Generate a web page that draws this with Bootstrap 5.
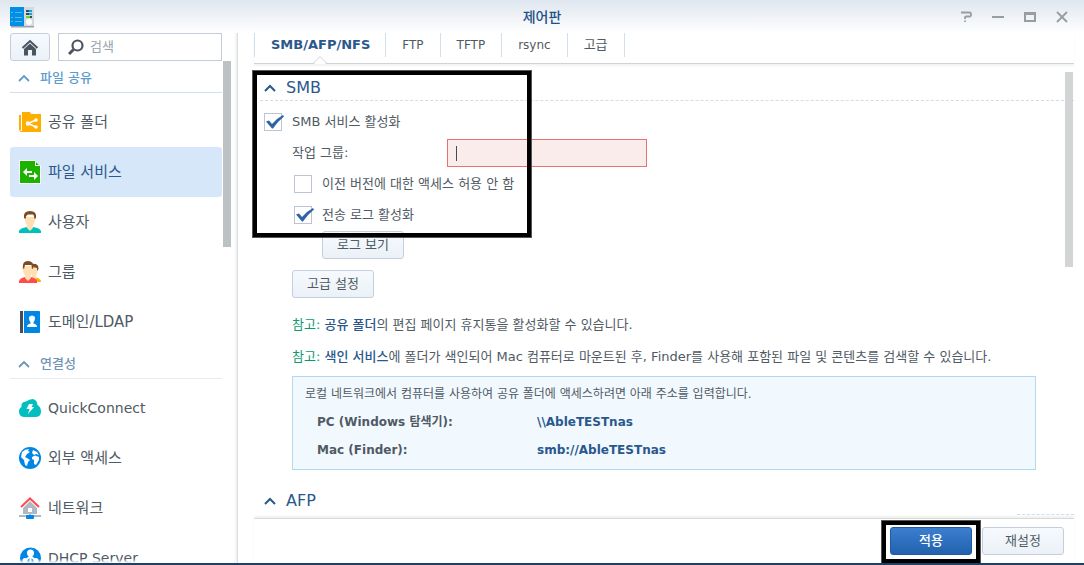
<!DOCTYPE html>
<html lang="ko">
<head>
<meta charset="utf-8">
<meta name="viewport" content="width=device-width, initial-scale=1">
<title>제어판</title>
<link rel="stylesheet" href="https://cdn.jsdelivr.net/npm/bootstrap@5.3.0/dist/css/bootstrap.min.css">
<style>
body{font-family:"DejaVu Sans","Noto Sans CJK KR",sans-serif;font-size:13px;line-height:20px;color:#505a64;background:#fff}
a{text-decoration:none;color:#2a588c}
.win{height:100vh;border-bottom:2px solid #1f3f66}
.titlebar{height:33px;background:linear-gradient(#dfe6ef,#fff);padding:0 16px 0 10px}
.titlebar h1{font-size:14px;line-height:20px;font-weight:500;color:#1f5089}
.winbtn{border:0;background:none;padding:0;width:12px;height:20px;display:flex;align-items:center}
.side{width:238px;border-right:1px solid #dcdee0;box-shadow:inset -3px 0 3px -2px #e6e8ea;padding-left:10px}
.search-row{padding-right:15px;height:28px;gap:8px}
.soft-btn{height:28px;min-width:82px;padding:0 14px;border:1px solid #c3cfdd;border-radius:3px;background:linear-gradient(#f6fafe,#ebf1f7);color:#505a64;font-size:13px;line-height:20px}
.home{min-width:40px;width:40px;padding:0}
.searchbox{border:1px solid #c3cdda;padding-left:9px;gap:6px}
.searchbox input{border:0;outline:0;width:100%;font-size:13px;color:#505a64;background:none;padding:0}
.searchbox input::placeholder{color:#98a3ae;opacity:1}
.list-pane{width:212px;flex:none}
.grp{height:32px;border-bottom:1px solid #d2dfec;margin-bottom:4px;padding:3px 0 0 8px;gap:10px;font-size:13px;font-weight:500;color:#5f9cce}
.grp.calm{color:#6f94b5;border-color:#e6eaee}
.item{height:50px;padding:0 9px;gap:7px;border-radius:3px;font-size:15px;color:#505a64}
.item.latin{font-size:14px}
.item.on{background:#d6e7f9;color:#2a588c}
.item svg{flex:none}
.bar-side{width:8px;height:186px;background:#bcc1c4;margin-left:1px}
.side-fade{height:4px;left:10px;right:16px;bottom:0;background:linear-gradient(#fff0,#fff)}
.pane{padding:0 10px 0 16px}
.tabs{height:31px;border-bottom:1px solid #d0d2d4;box-shadow:0 2px 2px #f2f3f4}
.tabs a{height:24px;padding:0 16px;border-right:1px solid #d2dfec;font-size:12px;line-height:24px;color:#505a64}
.tabs a:first-child{border-left:1px solid #d2dfec;font-size:13px;font-weight:700;color:#2a588c;padding:0 15px 0 16px;position:relative}
.tabs a.ko{font-size:13px}
.notch{left:50%;bottom:-7px;margin-left:-7px}
.form-area{padding:11px 0 0 6px}
.sec{height:26px;border-bottom:1px dashed #cfdded;font-size:16px;line-height:24px;font-weight:400;color:#2a588c;gap:10px;padding-left:4px;margin:0}
.rows{padding:6px 38px 0 4px}
.line-row{min-height:30px;margin-bottom:1px}
.tick{appearance:none;width:20px;height:20px;margin:0 8px 0 0;flex:none;background:url("data:image/svg+xml,%3Csvg xmlns='http://www.w3.org/2000/svg' width='20' height='20'%3E%3Crect x='.5' y='1.5' width='17' height='17' fill='%23fff' stroke='%23bcc6d2'/%3E%3C/svg%3E")}
.tick:checked{background-image:url("data:image/svg+xml,%3Csvg xmlns='http://www.w3.org/2000/svg' width='20' height='20'%3E%3Crect x='.5' y='1.5' width='17' height='17' fill='%23fff' stroke='%23bcc6d2'/%3E%3Cpath d='M2 9.5L5 8.5L8 12Q12.500 6.500 19 3L20 4.500Q13.500 9.500 9 16.500H8Z' fill='%232d62a3'/%3E%3C/svg%3E")}
.in1{padding-left:28px}
.in2{padding-left:30px}
.sub-row{padding-left:2px}
.wg-label{width:155px}
.wg{width:200px;height:28px;border:1px solid #e57373;background:#fbecec;border-radius:0;padding:0 9px;color:#414b55;outline:0}
.caret{width:1px;height:15px;left:9px;top:7px;background:#414b55}
.adv{margin:11px 0}
.note{line-height:32px;margin:0}
.note b{color:#0b9a6c;font-weight:400}
.note a{font-weight:500}
.info{border:1px solid #b4d9ec;background:#f1f9ff;padding:3px 12px 5px;margin-top:3px;font-size:12px;line-height:28px}
.info th{width:220px;font-weight:700;padding:0}
.info td{padding:0;font-weight:700;color:#2a588c}
.info table{margin-left:12px}
.afp{margin-top:18px;border-bottom:0}
.bar-main{right:11px;top:39px;width:8px;height:195px;background:#d3d4d6}
.foot{height:45px;margin:0 10px 0 16px;border-top:1px solid #d8dadc;box-shadow:0 -2px 2px #f0f1f2;padding:8px 10px 0;gap:10px;background:#fff}
.foot::before{content:"";position:absolute;right:0;top:-5px;width:57px;border-top:1px dashed #cfdded}
.go{background:linear-gradient(#3c7fcf,#2262ae);border-color:#1f5ba3;color:#fff;font-weight:500}
.marker{border:4px solid #000;pointer-events:none;box-shadow:0 0 0 1px #555}
.m-form{left:15px;top:38px;width:278px;height:166px}
.m-apply{inset:-6px -8px -8px -8px}
</style>
</head>
<body>
<div class="win d-flex flex-column overflow-hidden">
<header class="titlebar d-flex align-items-center position-relative flex-shrink-0">
<svg width="24" height="22" viewBox="0 0 24 22"><path fill="#9aa4ad" d="M1 20H24V21.500H1Z"/><path fill="#008ee6" d="M0 1H14V20H0Z"/><path fill="#d3dade" d="M14 1H24V20H14Z"/><path stroke="#5bd" d="M1 6.500h2m2 0h7M1 11.500h2m2 0h7M1 15.500h2m2 0h7"/><path stroke="#3f4a54" stroke-width="2" d="M16 5h6M16 8h6M16 11h6"/><path stroke="#0ad" stroke-width="2" d="M19 5h3M19 8h3"/><path stroke="#6bd52a" stroke-width="2" d="M16 11h4"/><circle cx="19" cy="16" r="3" fill="#fff"/></svg>
<h1 class="m-0 position-absolute start-50 translate-middle-x">제어판</h1>
<div class="d-flex ms-auto" style="gap:20px">
<button class="winbtn" aria-label="도움말"><svg width="12" height="12" fill="none" stroke="#989da3" stroke-width="1.800"><path d="M1 1.500H9.500Q11 1.500 11 3V4Q11 5.500 9.500 5.500H6Q5 5.500 5 6.500V8M5 9.500V11"/></svg></button>
<button class="winbtn" aria-label="최소화"><svg width="12" height="12"><path fill="#989da3" d="M0 5H12V7H0Z"/></svg></button>
<button class="winbtn" aria-label="최대화"><svg width="12" height="12"><path fill="none" stroke="#989da3" stroke-width="2" d="M1 2H11V10H1Z"/><path fill="#989da3" d="M0 1H12V4H0Z"/></svg></button>
<button class="winbtn" aria-label="닫기"><svg width="12" height="12"><path stroke="#989da3" stroke-width="1.800" d="M1 1L11 11M11 1L1 11"/></svg></button>
</div>
</header>
<div class="d-flex flex-grow-1" style="min-height:0">
<aside class="side d-flex flex-column flex-shrink-0 position-relative overflow-hidden">
<div class="search-row d-flex flex-shrink-0">
<button class="soft-btn home d-flex align-items-center justify-content-center" aria-label="홈"><svg width="18" height="17" viewBox="0 0 18 17"><path fill="none" stroke="#4b5560" stroke-width="2" d="M1.500 9L9 2L16.500 9"/><path fill="#4b5560" d="M3 10L9 4.500L15 10V16.500H11V11H7V16.500H3Z"/></svg></button>
<label class="searchbox d-flex align-items-center flex-grow-1"><svg class="flex-shrink-0" width="16" height="16" viewBox="0 0 16 16" fill="none" stroke="#4b5560"><circle cx="9.500" cy="6.500" r="5" stroke-width="2.200"/><path stroke-width="3" d="M5.500 10.500L1 15"/></svg><input type="text" placeholder="검색" aria-label="검색"></label>
</div>
<div class="d-flex">
<nav class="list-pane">
<div class="grp d-flex align-items-center"><svg width="12" height="8" fill="none" stroke="currentColor" stroke-width="1.800"><path d="M1 7L6 2L11 7"/></svg>파일 공유</div>
<a href="#" class="item d-flex align-items-center"><svg width="22" height="22"><path fill="#ffae00" d="M0 4H2V19.500H0ZM3 1H11L12 3H22V21H1V20H3Z"/><path fill="none" stroke="#fff" stroke-width="1.500" d="M17 9L9 12.500L17 16"/><g fill="#fff"><circle cx="9" cy="12.500" r="2.200"/><circle cx="17" cy="9" r="1.800"/><circle cx="17" cy="16" r="1.800"/></g></svg>공유 폴더</a>
<a href="#" class="item on d-flex align-items-center"><svg width="22" height="24"><path fill="#1db100" stroke="#fff" d="M.5.5H16L21.500 6V23.500H.5Z"/><path fill="#fff" d="M16 1V6H21L20 5H17V2ZM4 12L8 8V11H13V13H8V16ZM19 16L15 12V15H10V17H15V20Z"/></svg>파일 서비스</a>
<a href="#" class="item d-flex align-items-center"><svg width="22" height="22"><path fill="#00bfbf" d="M0 22V20Q1 17 8 16H14Q21 17 22 20V22Z"/><path fill="#ffdfb3" d="M8 13H14V17L11 20L8 17Z"/><path fill="#ffdfb3" d="M6 6H16Q17 7 16 9Q15 15 11 15.500Q7 15 6 9Q5 7 6 6Z"/><path fill="#7b4b22" d="M5 7Q4 0 11 0Q18 0 17 7L15.500 8Q15 4 14 3.500H9Q7 4 6.500 8Z"/></svg>사용자</a>
<a href="#" class="item d-flex align-items-center"><svg width="22" height="22"><path fill="#ffae00" d="M15 16Q21 17 22 20V21H16Z"/><path fill="#ffdfb3" d="M13 6H18.500V11L17 15V18H13Z"/><path fill="#7b4b22" d="M12 3Q20 2 19.500 8L18 10V7L14 6Z"/><path fill="#ff4b4b" d="M0 22V20Q1 17 6 16H12Q17 17 18 20V22Z"/><path fill="#ffdfb3" d="M6 13H12V17L9 20L6 17ZM4 5H14Q16 7 14 10Q13 15 9 15.500Q5 15 4 10Q2 7 4 5Z"/><path fill="#7b4b22" d="M4 7Q3 0 9 0Q15 0 14.500 7L13 8L12.500 4H6L5 8Z"/></svg>그룹</a>
<a href="#" class="item d-flex align-items-center"><svg width="22" height="22"><path fill="#454f5a" d="M1 0H4V22H1Z"/><path fill="#0086e5" d="M5 0H20Q21 0 21 1V21Q21 22 20 22H5Z"/><path fill="#fff" d="M10 6Q13 3 16 6Q16 10 14.500 11V12.500Q18 13 18 16H8Q8 13 11.500 12.500V11Q10 10 10 6Z"/></svg>도메인/LDAP</a>
<div class="grp calm d-flex align-items-center"><svg width="12" height="8" fill="none" stroke="currentColor" stroke-width="1.800"><path d="M1 7L6 2L11 7"/></svg>연결성</div>
<a href="#" class="item latin d-flex align-items-center"><svg width="22" height="18"><path fill="#00bfbf" d="M6 18Q0 18 0 12.500Q0 9 2.500 8Q1.500 3 7 2.500Q10 0 14 0Q18 1 18.500 6Q22 8 22 12.500Q22 18 16 18Z"/><path fill="#fff" d="M10 5H14L12.500 8H15L9 15L10.500 10H7.500Z"/></svg>QuickConnect</a>
<a href="#" class="item d-flex align-items-center"><svg width="22" height="22"><circle cx="11" cy="11" r="11" fill="#0086e5"/><path fill="#fff" d="M3 5Q6 2 10 2L9 4L11 5L8 7L6 10L8 11L11 13L9 15L8 19L6 18L5 13L2 10ZM14 3L18 5L20 8L17 7L15 8L13 6ZM13 10L16 8.500L20 10V13L17 18L15 17V13L13 12Z"/></svg>외부 액세스</a>
<a href="#" class="item d-flex align-items-center"><svg width="22" height="22"><path fill="#aeb9c4" d="M11 4L18 11V17H12V18H22V20H0V18H10V17H4V11Z"/><path fill="#fff" d="M9 11H13V15H9Z"/><path fill="none" stroke="#ff4b4b" stroke-width="2" d="M2 10L11 1.500L20 10"/><rect x="7" y="18" width="8" height="4" rx="1" fill="#0086e5"/></svg>네트워크</a>
<a href="#" class="item latin d-flex align-items-center"><svg width="22" height="22"><circle cx="11.500" cy="11" r="10.500" fill="#0086e5"/><path fill="none" stroke="#fff" stroke-width="2" d="M11.500 5V15M11.500 9L7 13M11.500 9L16 13"/><g fill="#fff"><circle cx="11.500" cy="6" r="3.500"/><circle cx="6" cy="13.500" r="2.500"/><circle cx="17" cy="13.500" r="2.500"/></g></svg>DHCP Server</a>
</nav>
<div class="bar-side"></div>
</div>
<div class="side-fade position-absolute"></div>
</aside>
<main class="flex-grow-1 d-flex flex-column position-relative" style="min-width:0">
<div class="pane flex-grow-1 overflow-hidden">
<nav class="tabs d-flex">
<a href="#">SMB/AFP/NFS<svg class="notch position-absolute" width="14" height="8"><path fill="#fff" d="M1 8L7 1L13 8Z"/><path fill="none" stroke="#d0d2d4" d="M0 7.500L7 .5L14 7.500"/></svg></a><a href="#">FTP</a><a href="#">TFTP</a><a href="#">rsync</a><a href="#" class="ko">고급</a>
</nav>
<div class="form-area">
<h2 class="sec d-flex align-items-center"><svg width="12" height="8" fill="none" stroke="currentColor" stroke-width="2"><path d="M1 7L6 2L11 7"/></svg>SMB</h2>
<form class="rows" onsubmit="return false">
<div class="line-row d-flex align-items-center"><input class="tick" type="checkbox" id="smb" checked><label for="smb">SMB 서비스 활성화</label></div>
<div class="in1">
<div class="line-row d-flex align-items-center"><label class="wg-label" for="wg">작업 그룹:</label><div class="position-relative"><input class="wg d-block" type="text" id="wg"><span class="caret position-absolute"></span></div></div>
<div class="line-row sub-row d-flex align-items-center"><input class="tick" type="checkbox" id="prev"><label for="prev">이전 버전에 대한 액세스 허용 안 함</label></div>
<div class="line-row sub-row d-flex align-items-center"><input class="tick" type="checkbox" id="log" checked><label for="log">전송 로그 활성화</label></div>
<div class="in2"><button type="button" class="soft-btn d-block">로그 보기</button></div>
<button type="button" class="soft-btn adv d-block">고급 설정</button>
<p class="note"><b>참고:</b> <a href="#">공유 폴더</a>의 편집 페이지 휴지통을 활성화할 수 있습니다.</p>
<p class="note text-nowrap"><b>참고:</b> <a href="#">색인 서비스</a>에 폴더가 색인되어 Mac 컴퓨터로 마운트된 후, Finder를 사용해 포함된 파일 및 콘텐츠를 검색할 수 있습니다.</p>
<div class="info">
<div>로컬 네트워크에서 컴퓨터를 사용하여 공유 폴더에 액세스하려면 아래 주소를 입력합니다.</div>
<table><tr><th scope="row">PC (Windows 탐색기):</th><td>\\AbleTESTnas</td></tr><tr><th scope="row">Mac (Finder):</th><td>smb://AbleTESTnas</td></tr></table>
</div>
</div>
</form>
<h2 class="sec afp d-flex align-items-center"><svg width="12" height="8" fill="none" stroke="currentColor" stroke-width="2"><path d="M1 7L6 2L11 7"/></svg>AFP</h2>
</div>
</div>
<div class="bar-main position-absolute"></div>
<footer class="foot d-flex justify-content-end align-items-start flex-shrink-0 position-relative">
<div class="position-relative"><button type="button" class="soft-btn go d-block">적용</button><span class="marker m-apply position-absolute"></span></div>
<button type="button" class="soft-btn">재설정</button>
</footer>
<div class="marker m-form position-absolute"></div>
</main>
</div>
</div>
<script src="https://cdn.jsdelivr.net/npm/bootstrap@5.3.0/dist/js/bootstrap.bundle.min.js"></script>
</body>
</html>
